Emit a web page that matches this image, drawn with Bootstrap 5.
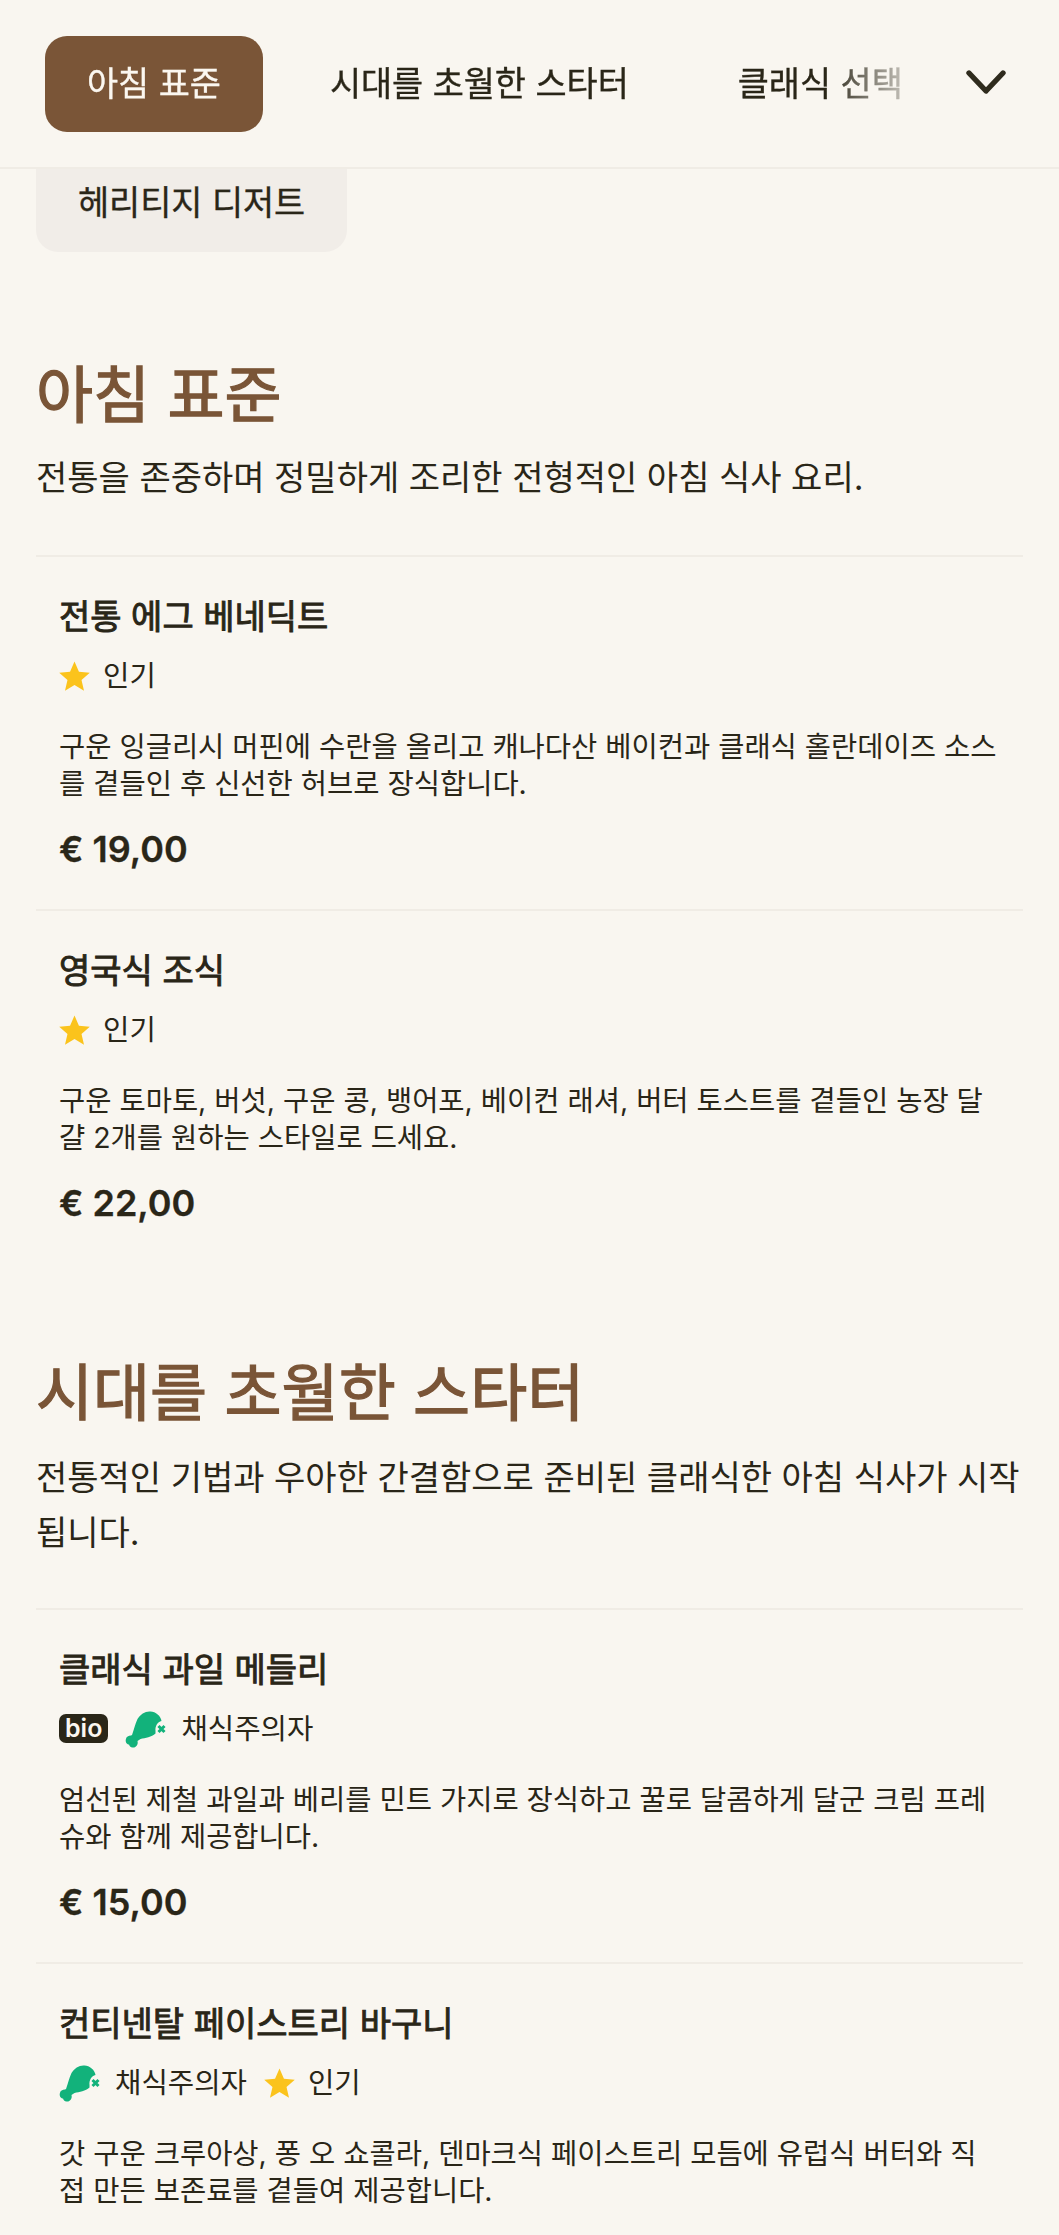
<!doctype html>
<html lang="ko"><head><meta charset="utf-8">
<link href="https://cdn.jsdelivr.net/npm/bootstrap@5.3.0/dist/css/bootstrap.min.css" rel="stylesheet">
<style>
:root{--ink:#2a2618;--brown:#7a5537;--paper:#f9f6f0;--line:#f0ece5}
html,body{height:100%}
body{background:var(--paper);color:var(--ink);font-family:Inter,"Noto Sans CJK KR",sans-serif;overflow:hidden;word-break:break-all}
.hdr{height:169px;border-bottom:2px solid var(--line);padding:36px 36px 0 45px}
.tabs{width:898px;height:96px;overflow:hidden;gap:25px;mask-image:linear-gradient(to right,#000 780px,rgba(0,0,0,.25) 860px,transparent 898px);-webkit-mask-image:linear-gradient(to right,#000 780px,rgba(0,0,0,.25) 860px,transparent 898px)}
.tabi{font-size:33.8px;line-height:96px;padding:0 42px;white-space:nowrap;border-radius:22px;color:var(--ink);text-decoration:none;-webkit-text-stroke:.35px currentColor}
.tabi.on{background:var(--brown);color:#fbf7f0}
.chev{margin-left:auto;margin-right:16px;margin-top:31px;width:42px;height:30px}
.extra{width:311px;height:83px;margin-left:36px;background:#f1ede8;border-radius:0 0 22px 22px;font-size:33.8px;line-height:68px;padding-left:42px;-webkit-text-stroke:.35px currentColor}
.sect{padding:0 36px}
.sect h2{font-size:62px;line-height:78px;font-weight:400;-webkit-text-stroke:1.3px currentColor;color:var(--brown);margin:0;}
.sdesc{font-size:34px;line-height:54px;margin:0}
.itm{border-top:2px solid var(--line);padding:0 23px;height:354px}
.itm h3{font-size:34px;line-height:46px;font-weight:400;-webkit-text-stroke:.9px currentColor;margin:0;padding-top:37px;height:83px}
.tags{height:36px;margin-top:18px;font-size:28.7px;line-height:36px;gap:17px}
.tag{gap:13px}
.bio{background:var(--ink);color:#fbf7f0;font-weight:600;font-size:25px;line-height:28px;height:29px;padding:0 6px;border-radius:7px;margin-top:-1px}
.idesc{font-size:28.5px;line-height:36.5px;margin:35px 0 0}
.price{font-size:36px;line-height:44px;font-weight:600;margin-top:25px;-webkit-text-stroke:.3px currentColor}
.pad-a{padding-top:105px}.pad-b{padding-top:92px}
.gap-a{margin-top:16px;margin-bottom:50px}.gap-b{margin-top:17px;margin-bottom:48px;line-height:55px}
</style></head><body>
<header class="hdr d-flex">
  <nav class="tabs d-flex">
    <a class="tabi on">아침 표준</a><a class="tabi">시대를 초월한 스타터</a><a class="tabi">클래식 선택</a>
  </nav>
  <svg class="chev" viewBox="0 0 42 30" fill="none" stroke="#2f2b1d" stroke-width="5.4" stroke-linecap="round" stroke-linejoin="round"><path d="M4 6 21 24 38 6"/></svg>
</header>
<div class="extra">헤리티지 디저트</div>

<svg width="0" height="0" class="position-absolute"><defs>
<symbol id="star" viewBox="0 0 30 30"><path fill="#fbc31c" d="M15 .5l4.300 9.800 10.500 1-8 7 2.400 10.400-9.200-5.400-9.200 5.400L8.200 18.300l-8-7 10.500-1z"/></symbol>
<symbol id="leg" viewBox="0 0 42 37"><path fill="#12b27b" d="M25 .5C30 .5 35.500 5 36 10 32 11 29.500 15 30 20L30 22.500C26 26 20 27 15 28L12 30C13 33.500 10.500 37 7 36.500 5 36.500 3.800 35 3.500 33.500 1.200 33.500-.2 31 .3 28.500 .8 25.500 3 24.500 5.500 24.500L6.500 24C8.500 19 9.500 13 12 8 15 3 20 0 25 .5Z"/><path stroke="#12b27b" stroke-width="3" d="M33 15l6 6m0-6-6 6"/></symbol>
</defs></svg>

<section class="sect pad-a">
  <h2>아침 표준</h2>
  <p class="sdesc gap-a">전통을 존중하며 정밀하게 조리한 전형적인 아침 식사 요리.</p>
  <article class="itm">
    <h3>전통 에그 베네딕트</h3>
    <div class="tags d-flex align-items-center"><span class="tag d-flex align-items-center"><svg width="31" height="31"><use href="#star"/></svg>인기</span></div>
    <p class="idesc">구운 잉글리시 머핀에 수란을 올리고 캐나다산 베이컨과 클래식 홀란데이즈 소스를 곁들인 후 신선한 허브로 장식합니다.</p>
    <div class="price">€ 19,00</div>
  </article>
  <article class="itm">
    <h3>영국식 조식</h3>
    <div class="tags d-flex align-items-center"><span class="tag d-flex align-items-center"><svg width="31" height="31"><use href="#star"/></svg>인기</span></div>
    <p class="idesc">구운 토마토, 버섯, 구운 콩, 뱅어포, 베이컨 래셔, 버터 토스트를 곁들인 농장 달걀 2개를 원하는 스타일로 드세요.</p>
    <div class="price">€ 22,00</div>
  </article>
</section>
<section class="sect pad-b">
  <h2>시대를 초월한 스타터</h2>
  <p class="sdesc gap-b">전통적인 기법과 우아한 간결함으로 준비된 클래식한 아침 식사가 시작됩니다.</p>
  <article class="itm">
    <h3>클래식 과일 메들리</h3>
    <div class="tags d-flex align-items-center"><span class="bio">bio</span><span class="tag d-flex align-items-center"><svg width="43" height="37"><use href="#leg"/></svg>채식주의자</span></div>
    <p class="idesc">엄선된 제철 과일과 베리를 민트 가지로 장식하고 꿀로 달콤하게 달군 크림 프레슈와 함께 제공합니다.</p>
    <div class="price">€ 15,00</div>
  </article>
  <article class="itm">
    <h3>컨티넨탈 페이스트리 바구니</h3>
    <div class="tags d-flex align-items-center"><span class="tag d-flex align-items-center"><svg width="43" height="37"><use href="#leg"/></svg>채식주의자</span><span class="tag d-flex align-items-center"><svg width="31" height="31"><use href="#star"/></svg>인기</span></div>
    <p class="idesc">갓 구운 크루아상, 퐁 오 쇼콜라, 덴마크식 페이스트리 모듬에 유럽식 버터와 직접 만든 보존료를 곁들여 제공합니다.</p>
  </article>
</section>
<script src="https://cdn.jsdelivr.net/npm/bootstrap@5.3.0/dist/js/bootstrap.bundle.min.js"></script>
</body></html>
